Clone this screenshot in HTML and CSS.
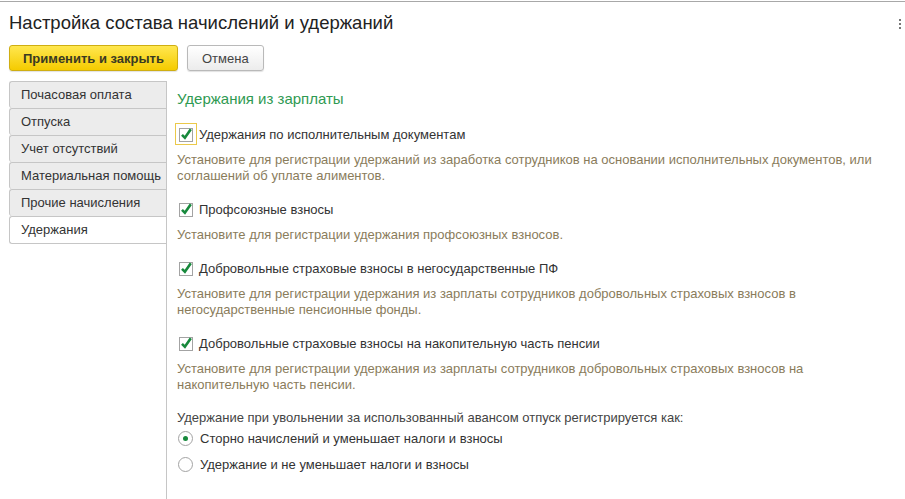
FILE: index.html
```html
<!DOCTYPE html>
<html lang="ru">
<head>
    <meta charset="UTF-8">
    <title>Настройка состава начислений и удержаний</title>
    <link rel="stylesheet" href="styles.css">
</head>
<body>
    <div class="topline"></div>
    <div class="header">
        <h1 class="title">Настройка состава начислений и удержаний</h1>
        <div class="more"><span></span><span></span><span></span></div>
    </div>
    <div class="toolbar">
        <button class="btn btn-primary">Применить и закрыть</button>
        <button class="btn">Отмена</button>
    </div>
    <div class="main">
        <div class="tabs">
            <div class="tab">Почасовая оплата</div>
            <div class="tab">Отпуска</div>
            <div class="tab">Учет отсутствий</div>
            <div class="tab">Материальная помощь</div>
            <div class="tab">Прочие начисления</div>
            <div class="tab active">Удержания</div>
        </div>
        <div class="content">
            <div class="heading">Удержания из зарплаты</div>

            <div class="check-row">
                <span class="check focused">
                    <svg width="16" height="16" viewBox="0 0 16 16"><rect x="1.5" y="2.5" width="13" height="13" fill="#fff" stroke="#a3a3a3"/><path d="M4 8.8 L6.9 11.8 L12.8 3.2" fill="none" stroke="#17893c" stroke-width="2.6"/></svg>
                </span>
                <span class="label">Удержания по исполнительным документам</span>
            </div>
            <div class="desc">Установите для регистрации удержаний из заработка сотрудников на основании исполнительных документов, или соглашений об уплате алиментов.</div>

            <div class="check-row">
                <span class="check">
                    <svg width="16" height="16" viewBox="0 0 16 16"><rect x="1.5" y="2.5" width="13" height="13" fill="#fff" stroke="#a3a3a3"/><path d="M4 8.8 L6.9 11.8 L12.8 3.2" fill="none" stroke="#17893c" stroke-width="2.6"/></svg>
                </span>
                <span class="label">Профсоюзные взносы</span>
            </div>
            <div class="desc">Установите для регистрации удержания профсоюзных взносов.</div>

            <div class="check-row">
                <span class="check">
                    <svg width="16" height="16" viewBox="0 0 16 16"><rect x="1.5" y="2.5" width="13" height="13" fill="#fff" stroke="#a3a3a3"/><path d="M4 8.8 L6.9 11.8 L12.8 3.2" fill="none" stroke="#17893c" stroke-width="2.6"/></svg>
                </span>
                <span class="label">Добровольные страховые взносы в негосударственные ПФ</span>
            </div>
            <div class="desc">Установите для регистрации удержания из зарплаты сотрудников добровольных страховых взносов в негосударственные пенсионные фонды.</div>

            <div class="check-row">
                <span class="check">
                    <svg width="16" height="16" viewBox="0 0 16 16"><rect x="1.5" y="2.5" width="13" height="13" fill="#fff" stroke="#a3a3a3"/><path d="M4 8.8 L6.9 11.8 L12.8 3.2" fill="none" stroke="#17893c" stroke-width="2.6"/></svg>
                </span>
                <span class="label">Добровольные страховые взносы на накопительную часть пенсии</span>
            </div>
            <div class="desc">Установите для регистрации удержания из зарплаты сотрудников добровольных страховых взносов на накопительную часть пенсии.</div>

            <div class="question">Удержание при увольнении за использованный авансом отпуск регистрируется как:</div>
            <div class="radio-row">
                <span class="radio checked"></span>
                <span class="label">Сторно начислений и уменьшает налоги и взносы</span>
            </div>
            <div class="radio-row">
                <span class="radio"></span>
                <span class="label">Удержание и не уменьшает налоги и взносы</span>
            </div>
        </div>
    </div>
</body>
</html>
```

FILE: styles.css
```css
html, body {
    height: 100%;
}
body {
    margin: 0;
    padding-top: 1px;
    box-sizing: border-box;
    background: #fff;
    font-family: "Liberation Sans", Arial, sans-serif;
    font-size: 13px;
    color: #333;
    display: flex;
    flex-direction: column;
}
.topline {
    border-top: 1px solid #a8a8a8;
}
.header {
    display: flex;
    align-items: center;
    justify-content: space-between;
    padding: 10px 4px 0 9px;
}
.title {
    margin: 0;
    font-size: 18.5px;
    font-weight: normal;
    line-height: 22px;
    color: #222;
}
.more {
    display: flex;
    flex-direction: column;
    gap: 2px;
    padding-top: 1px;
}
.more span {
    width: 2px;
    height: 2px;
    background: #777;
}
.toolbar {
    display: flex;
    gap: 9px;
    padding: 11px 9px 0;
}
.btn {
    height: 26px;
    padding: 0 14px;
    font-family: inherit;
    font-size: 13px;
    color: #444;
    background: linear-gradient(#ffffff, #ececec);
    border: 1px solid #b9b9b9;
    border-radius: 3px;
    box-shadow: 0 1px 1px rgba(0,0,0,0.12);
}
.btn-primary {
    padding: 0 13px;
    font-weight: bold;
    color: #3a3a22;
    background: linear-gradient(#ffe74f, #f5cb00);
    border-color: #cfae12;
}
.main {
    flex: 1;
    display: flex;
    padding: 10px 0 0 9px;
}
.tabs {
    width: 157px;
    border-right: 1px solid #c6c6c6;
}
.tab {
    height: 26px;
    line-height: 26px;
    padding-left: 11px;
    background: #ececec;
    border: 1px solid #c6c6c6;
    border-right: none;
    border-bottom: none;
    border-radius: 3px 0 0 3px;
    color: #333;
}
.tab.active {
    background: #fff;
    border-bottom: 1px solid #c6c6c6;
}
.content {
    flex: 1;
    padding: 9px 25px 0 10px;
}
.heading {
    font-size: 15px;
    line-height: 18px;
    color: #2f9a52;
    margin-bottom: 14px;
}
.check-row {
    display: flex;
    align-items: center;
    height: 24px;
}
.check {
    width: 20px;
    height: 20px;
    margin-left: -2px;
    border: 1px solid transparent;
    display: flex;
    align-items: center;
    justify-content: center;
}
.check.focused {
    border-color: #ebc94a;
}
.check svg {
    display: block;
    margin-top: -1px;
}
.check-row .label {
    margin-left: 2px;
}
.desc {
    margin: 6px 0 13px;
    line-height: 16px;
    color: #8a7c5b;
    max-width: 700px;
}
.question {
    margin-top: 17px;
    line-height: 16px;
    color: #444;
}
.radio-row {
    display: flex;
    align-items: center;
    height: 24px;
}
.radio-row + .radio-row {
    margin-top: 2px;
}
.radio {
    width: 13px;
    height: 13px;
    margin-left: 1px;
    border: 1px solid #a3a3a3;
    border-radius: 50%;
    background: #fff;
    display: flex;
    align-items: center;
    justify-content: center;
}
.radio.checked::after {
    content: "";
    width: 5px;
    height: 5px;
    border-radius: 50%;
    background: #17893c;
}
.radio-row .label {
    margin-left: 7px;
}
```
